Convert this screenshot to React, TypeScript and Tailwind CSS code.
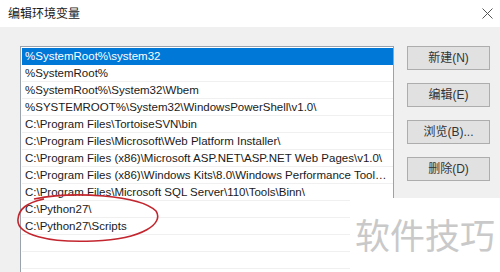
import React from "react";

const paths = [
  "%SystemRoot%\\system32",
  "%SystemRoot%",
  "%SystemRoot%\\System32\\Wbem",
  "%SYSTEMROOT%\\System32\\WindowsPowerShell\\v1.0\\",
  "C:\\Program Files\\TortoiseSVN\\bin",
  "C:\\Program Files\\Microsoft\\Web Platform Installer\\",
  "C:\\Program Files (x86)\\Microsoft ASP.NET\\ASP.NET Web Pages\\v1.0\\",
  "C:\\Program Files (x86)\\Windows Kits\\8.0\\Windows Performance Toolkit\\",
  "C:\\Program Files\\Microsoft SQL Server\\110\\Tools\\Binn\\",
  "C:\\Python27\\",
  "C:\\Python27\\Scripts",
  "",
  "",
  "",
];

const buttons = ["新建(N)", "编辑(E)", "浏览(B)...", "删除(D)"];

const font = {
  fontFamily: '"Liberation Sans", "Noto Sans CJK SC", sans-serif',
};

const App = () => {
  return (
    <div
      className="relative w-[500px] h-[272px] overflow-hidden bg-[#f0f0f0] text-[#1a1a1a]"
      style={font}
    >
      <div className="flex h-[27px] items-center justify-between bg-white pl-2 pr-[6px]">
        <span className="text-[12px] leading-none">编辑环境变量</span>
        <svg width="11" height="11" viewBox="0 0 11 11" className="mr-[1px]">
          <path d="M0.5 0.5 L10.5 10.5 M10.5 0.5 L0.5 10.5" stroke="#555" strokeWidth="1" />
        </svg>
      </div>

      <div className="flex pl-[20px] pt-[19px]">
        <div className="h-[240px] w-[374px] border border-[#9aa3ad] bg-white pl-[1px] pt-[1px]">
          {paths.map((p, i) => (
            <div
              key={i}
              className={
                i === 0
                  ? "h-[17px] truncate bg-[#0078d7] pl-[3px] pr-[4px] text-[11.5px] leading-[16px] text-white"
                  : "h-[17px] truncate border-b border-[#f0f0f0] pl-[3px] pr-[4px] text-[11.5px] leading-[16px]"
              }
            >
              {p}
            </div>
          ))}
        </div>

        <div className="ml-[13px] flex flex-col gap-[13px]">
          {buttons.map((b) => (
            <button
              key={b}
              className="h-[24px] w-[83px] border border-[#adadad] bg-[#e1e1e1] text-[12px] leading-none text-[#333]"
            >
              {b}
            </button>
          ))}
        </div>
      </div>

      <svg
        className="absolute left-[14px] top-[193px]"
        width="148"
        height="52"
        viewBox="0 0 148 52"
      >
        <path
          d="M20 6 C60 -2 125 2 142 18 C150 30 130 46 80 48 C35 50 2 42 4 26 C5 16 12 10 30 6"
          fill="none"
          stroke="#c3262e"
          strokeWidth="1.6"
        />
      </svg>

      <div className="absolute left-[350px] top-[198px] right-0 bottom-0 bg-white">
        <div
          className="pl-[5px] pt-[16px] text-[35px] leading-[40px] text-[#c9c9c9]"
          style={{ fontFamily: '"Noto Sans CJK SC", sans-serif' }}
        >
          软件技巧
        </div>
      </div>
    </div>
  );
};

export default App;
